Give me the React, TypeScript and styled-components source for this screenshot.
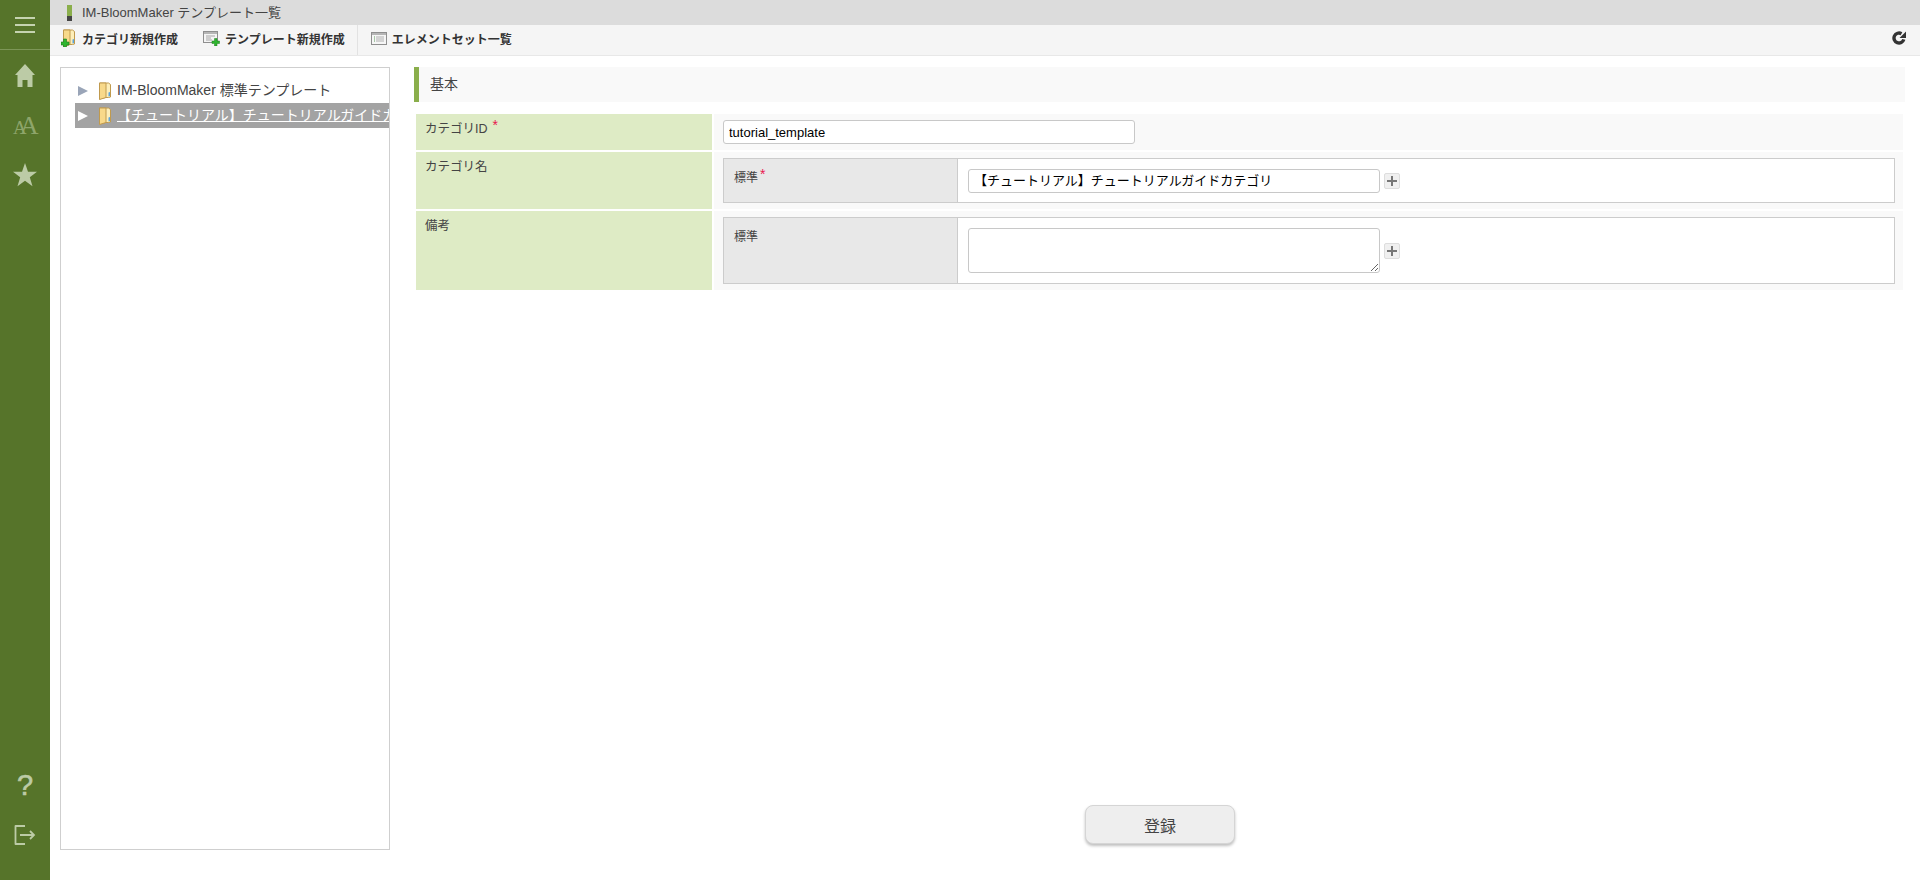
import React from 'react'
import styled, { createGlobalStyle } from 'styled-components'

const GlobalStyle = createGlobalStyle`
  html, body {
    margin: 0;
    height: 100%;
    background: #fff;
  }
  body {
    font-family: "Liberation Sans", "Noto Sans CJK JP", sans-serif;
    font-size: 13px;
    color: #333;
  }
  * {
    box-sizing: border-box;
  }
`

function FolderIcon({ plus }: { plus?: boolean }) {
  return (
    <IconSvg width="16" height="18" viewBox="0 0 16 18">
      <path d="M2.5 1h9l2 1.500v12.500l-2 .5h-3l-6 1.500z" fill="#fdeeb9" stroke="#c09a4e" />
      <path d="M2.5 1h6.500v14.500l-6.500 2z" fill="#f8d98a" stroke="#c09a4e" />
      <path d="M11.500 10.500l1.500-.5v4l-1.500.5z" fill="#5aa5e0" />
      {plus && <path d="M0 13h2.500v-3h3v3h2.500v3h-2.500v2h-3v-2h-2.500z" fill="#2fb52f" stroke="#1c7a1c" strokeWidth="0.6" />}
    </IconSvg>
  )
}

function TemplateIcon() {
  return (
    <IconSvg width="17" height="15" viewBox="0 0 17 15">
      <rect x="0.5" y="0.5" width="14" height="11" fill="#f4f4f4" stroke="#8f8f8f" />
      <rect x="1" y="1" width="13" height="2" fill="#b5b5b5" />
      <path d="M3 5h9M3 7h5M3 9h6" stroke="#a6a6a6" />
      <path d="M9 10h2.500v-2.500h2.500v2.500h2.500v2.500h-2.500v2.500h-2.500v-2.500h-2.500z" fill="#2fb52f" stroke="#1c7a1c" strokeWidth="0.5" />
    </IconSvg>
  )
}

function ElementSetIcon() {
  return (
    <IconSvg width="16" height="13" viewBox="0 0 16 13">
      <rect x="0.5" y="0.5" width="15" height="12" fill="#f6f6f6" stroke="#8f8f8f" />
      <rect x="1" y="1" width="14" height="2" fill="#b5b5b5" />
      <path d="M3 5h1M3 7h1M3 9h1" stroke="#5a9a5a" />
      <path d="M5 5h8M5 7h8M5 9h8" stroke="#b0b0b0" />
    </IconSvg>
  )
}

function PlusButton() {
  return (
    <PlusBox>
      <svg width="10" height="10" viewBox="0 0 10 10">
        <path d="M4 0h2v4h4v2h-4v4h-2v-4h-4v-2h4z" fill="#777" />
      </svg>
    </PlusBox>
  )
}

export default function App() {
  return (
    <>
      <GlobalStyle />
      <Page>
        <SideBar>
          <MenuButton>
            <svg width="20" height="16" viewBox="0 0 20 16">
              <path d="M0 1h20M0 8h20M0 15h20" stroke="#c5d3b0" strokeWidth="2" />
            </svg>
          </MenuButton>
          <SideIcon>
            <svg width="20" height="23" viewBox="0 0 20 23">
              <path d="M10 0l10 11h-2.500v12h-5v-7h-5v7h-5v-12h-2.500z" fill="#bccba6" />
            </svg>
          </SideIcon>
          <SideIcon>
            <svg width="26" height="22" viewBox="0 0 26 22" overflow="visible">
              <text x="1" y="20" fontFamily="'Liberation Serif', serif" fill="#8ea56a">
                <tspan fontSize="19">A</tspan>
                <tspan fontSize="26" dx="-7">A</tspan>
              </text>
            </svg>
          </SideIcon>
          <SideIcon>
            <svg width="24" height="24" viewBox="0 0 24 24">
              <path d="M12 0l3 8.700h9l-7.200 5.500 2.700 9-7.500-5.400-7.500 5.400 2.700-9L0 8.700h9z" fill="#bccba6" />
            </svg>
          </SideIcon>
          <SideSpacer />
          <HelpMark>?</HelpMark>
          <LogoutIcon>
            <svg width="22" height="20" viewBox="0 0 22 20" fill="none" stroke="#bccba6" strokeWidth="1.800">
              <path d="M11 1H1.500v18H11" strokeLinejoin="round" />
              <path d="M6 10h14M16 6l4 4-4 4" />
            </svg>
          </LogoutIcon>
        </SideBar>
        <Main>
          <TitleBar>
            <TitleMark />
            <TitleText>IM-BloomMaker テンプレート一覧</TitleText>
          </TitleBar>
          <ToolBar>
            <ToolGroup>
              <ToolItem>
                <FolderIcon plus />
                カテゴリ新規作成
              </ToolItem>
              <ToolItem>
                <TemplateIcon />
                テンプレート新規作成
              </ToolItem>
            </ToolGroup>
            <ToolGroup>
              <ToolItem>
                <ElementSetIcon />
                エレメントセット一覧
              </ToolItem>
            </ToolGroup>
            <Reload>
              <svg width="14" height="14" viewBox="0 0 14 14">
                <path d="M11.800 8.400A5 5 0 1 1 9.500 2.700" fill="none" stroke="#333" strokeWidth="3.400" />
                <path d="M7.500 7H14V.5z" fill="#333" />
              </svg>
            </Reload>
          </ToolBar>
          <Content>
            <TreePanel>
              <TreeRow>
                <TreeArrow />
                <FolderIcon />
                <TreeLabel>IM-BloomMaker 標準テンプレート</TreeLabel>
              </TreeRow>
              <TreeRow $selected>
                <TreeArrow $selected />
                <FolderIcon />
                <TreeLabel $selected>【チュートリアル】チュートリアルガイドカテゴリ</TreeLabel>
              </TreeRow>
            </TreePanel>
            <FormArea>
              <SectionTitle>基本</SectionTitle>
              <FormGrid>
                <LabelCell>
                  カテゴリID<Required>*</Required>
                </LabelCell>
                <ValueCell>
                  <IdInput defaultValue="tutorial_template" />
                </ValueCell>
                <LabelCell>カテゴリ名</LabelCell>
                <ValueCell>
                  <LocaleTable>
                    <LocaleLabel>
                      標準<LocaleRequired>*</LocaleRequired>
                    </LocaleLabel>
                    <LocaleValue>
                      <NameInput defaultValue="【チュートリアル】チュートリアルガイドカテゴリ" />
                      <PlusButton />
                    </LocaleValue>
                  </LocaleTable>
                </ValueCell>
                <LabelCell>備考</LabelCell>
                <ValueCell>
                  <LocaleTable>
                    <LocaleLabel>標準</LocaleLabel>
                    <LocaleValue>
                      <NoteArea />
                      <PlusButton />
                    </LocaleValue>
                  </LocaleTable>
                </ValueCell>
              </FormGrid>
              <ButtonRow>
                <SubmitButton>登録</SubmitButton>
              </ButtonRow>
            </FormArea>
          </Content>
        </Main>
      </Page>
    </>
  )
}

const Page = styled.div`
  display: flex;
  width: 1920px;
  height: 880px;
  overflow: hidden;
`

const IconSvg = styled.svg`
  flex: none;
`

const SideBar = styled.nav`
  display: flex;
  flex-direction: column;
  align-items: center;
  width: 50px;
  background-color: #56742a;
`

const MenuButton = styled.div`
  display: flex;
  align-items: center;
  justify-content: center;
  width: 100%;
  height: 50px;
  border-bottom: 1px solid #7d9658;
`

const SideIcon = styled.div`
  display: flex;
  align-items: center;
  justify-content: center;
  height: 50px;
`

const SideSpacer = styled.div`
  flex: 1;
`

const HelpMark = styled.div`
  height: 30px;
  font-size: 29px;
  line-height: 30px;
  color: #bccba6;
  -webkit-text-stroke: 0.6px #bccba6;
`

const LogoutIcon = styled.div`
  display: flex;
  align-items: center;
  justify-content: center;
  height: 20px;
  margin: 25px 0 35px;
`

const Main = styled.div`
  display: flex;
  flex-direction: column;
  flex: 1;
  min-width: 0;
`

const TitleBar = styled.header`
  display: flex;
  align-items: center;
  height: 25px;
  padding-left: 17px;
  background-color: #dcdcdc;
`

const TitleMark = styled.div`
  width: 5px;
  height: 16px;
  margin-top: 1px;
  background: linear-gradient(#8aae4b 0 11px, #444 11px);
`

const TitleText = styled.span`
  margin-left: 10px;
  padding-bottom: 3px;
  font-size: 13px;
  color: #444;
`

const ToolBar = styled.div`
  display: flex;
  align-items: stretch;
  height: 31px;
  background-color: #f5f5f5;
  border-bottom: 1px solid #e8e8e8;
`

const ToolGroup = styled.div`
  display: flex;
  align-items: center;
  gap: 25px;
  padding: 0 12px 4px 11px;
  border-right: 1px solid #e2e2e2;

  &:nth-child(2) {
    padding-left: 13px;
    border-right: 0;
  }
`

const ToolItem = styled.div`
  display: flex;
  align-items: center;
  gap: 2px;
  font-size: 12px;
  font-weight: 700;
  color: #333;

  svg {
    margin-right: 3px;
  }
`

const Reload = styled.div`
  display: flex;
  align-items: center;
  margin-left: auto;
  padding: 0 14px 4px 0;
`

const Content = styled.main`
  display: flex;
  flex: 1;
  min-height: 0;
  padding: 11px 15px 0 10px;
`

const TreePanel = styled.aside`
  flex: none;
  width: 330px;
  height: 783px;
  padding-top: 10px;
  border: 1px solid #cfcfcf;
  overflow: hidden;
`

const TreeRow = styled.div<{ $selected?: boolean }>`
  display: flex;
  align-items: center;
  height: 25px;
  margin-left: 14px;
  padding-left: 3px;
  white-space: nowrap;
  background-color: ${(p) => (p.$selected ? '#a3a3a3' : 'transparent')};
`

const TreeArrow = styled.span<{ $selected?: boolean }>`
  flex: none;
  width: 0;
  height: 0;
  margin-right: 9px;
  border-style: solid;
  border-width: 5.500px 0 5.500px 10px;
  border-color: transparent transparent transparent ${(p) => (p.$selected ? '#fff' : '#9aa5b8')};
`

const TreeLabel = styled.span<{ $selected?: boolean }>`
  margin-left: 4px;
  padding-bottom: 3px;
  font-size: 14px;
  color: ${(p) => (p.$selected ? '#fff' : '#444')};
  text-decoration: ${(p) => (p.$selected ? 'underline' : 'none')};
`

const FormArea = styled.section`
  display: flex;
  flex-direction: column;
  flex: 1;
  min-width: 0;
  margin-left: 24px;
`

const SectionTitle = styled.h2`
  height: 35px;
  margin: 0;
  padding-left: 11px;
  font-size: 14px;
  font-weight: 400;
  line-height: 34px;
  color: #444;
  background-color: #f9f9f9;
  border-left: 5px solid #8aae4b;
`

const FormGrid = styled.div`
  display: grid;
  grid-template-columns: 296px 1fr;
  grid-template-rows: 36px 57px 79px;
  gap: 2px;
  margin: 12px 2px 0;
`

const LabelCell = styled.div`
  padding: 6px 9px;
  font-size: 12.500px;
  line-height: 18px;
  color: #444;
  background-color: #deebc5;
`

const ValueCell = styled.div`
  padding: 6px 8px 6px 9px;
  background-color: #f9f9f9;
`

const Required = styled.span`
  margin-left: 5px;
  font-size: 14px;
  line-height: 0;
  color: #e8174f;
  vertical-align: 3px;
`

const LocaleRequired = styled(Required)`
  margin-left: 2px;
`

const IdInput = styled.input`
  display: block;
  flex: none;
  width: 412px;
  height: 24px;
  padding: 0 5px;
  font-family: inherit;
  font-size: 13px;
  color: #000;
  background: #fff;
  border: 1px solid #c8c8c8;
  border-radius: 3px;
  outline: none;
`

const NameInput = styled(IdInput)`
  padding-bottom: 2px;
`

const LocaleTable = styled.div`
  display: flex;
  height: 100%;
  background-color: #fff;
  border: 1px solid #ccc;
`

const LocaleLabel = styled.div`
  flex: none;
  width: 234px;
  padding: 11px 10px;
  font-size: 12px;
  line-height: 16px;
  color: #444;
  background-color: #e8e8e8;
  border-right: 1px solid #ccc;
`

const LocaleValue = styled.div`
  display: flex;
  flex: 1;
  align-items: center;
  padding-left: 10px;
`

const NoteArea = styled.textarea`
  display: block;
  flex: none;
  width: 412px;
  height: 45px;
  margin: 0;
  background: #fff;
  border: 1px solid #c8c8c8;
  border-radius: 3px;
  outline: none;
`

const PlusBox = styled.div`
  display: flex;
  align-items: center;
  justify-content: center;
  width: 16px;
  height: 16px;
  margin-left: 4px;
  background-color: #f0f0f0;
  border: 1px solid #ddd;
  border-radius: 2px;
`

const ButtonRow = styled.div`
  display: flex;
  justify-content: center;
  margin-top: 515px;
  padding-left: 1px;
`

const SubmitButton = styled.button`
  width: 150px;
  height: 39px;
  font-family: inherit;
  font-size: 16px;
  color: #444;
  background-color: #eee;
  border: 1px solid #d5d5d5;
  border-radius: 8px;
  box-shadow: 0 2px 3px rgba(0, 0, 0, 0.25);
`
